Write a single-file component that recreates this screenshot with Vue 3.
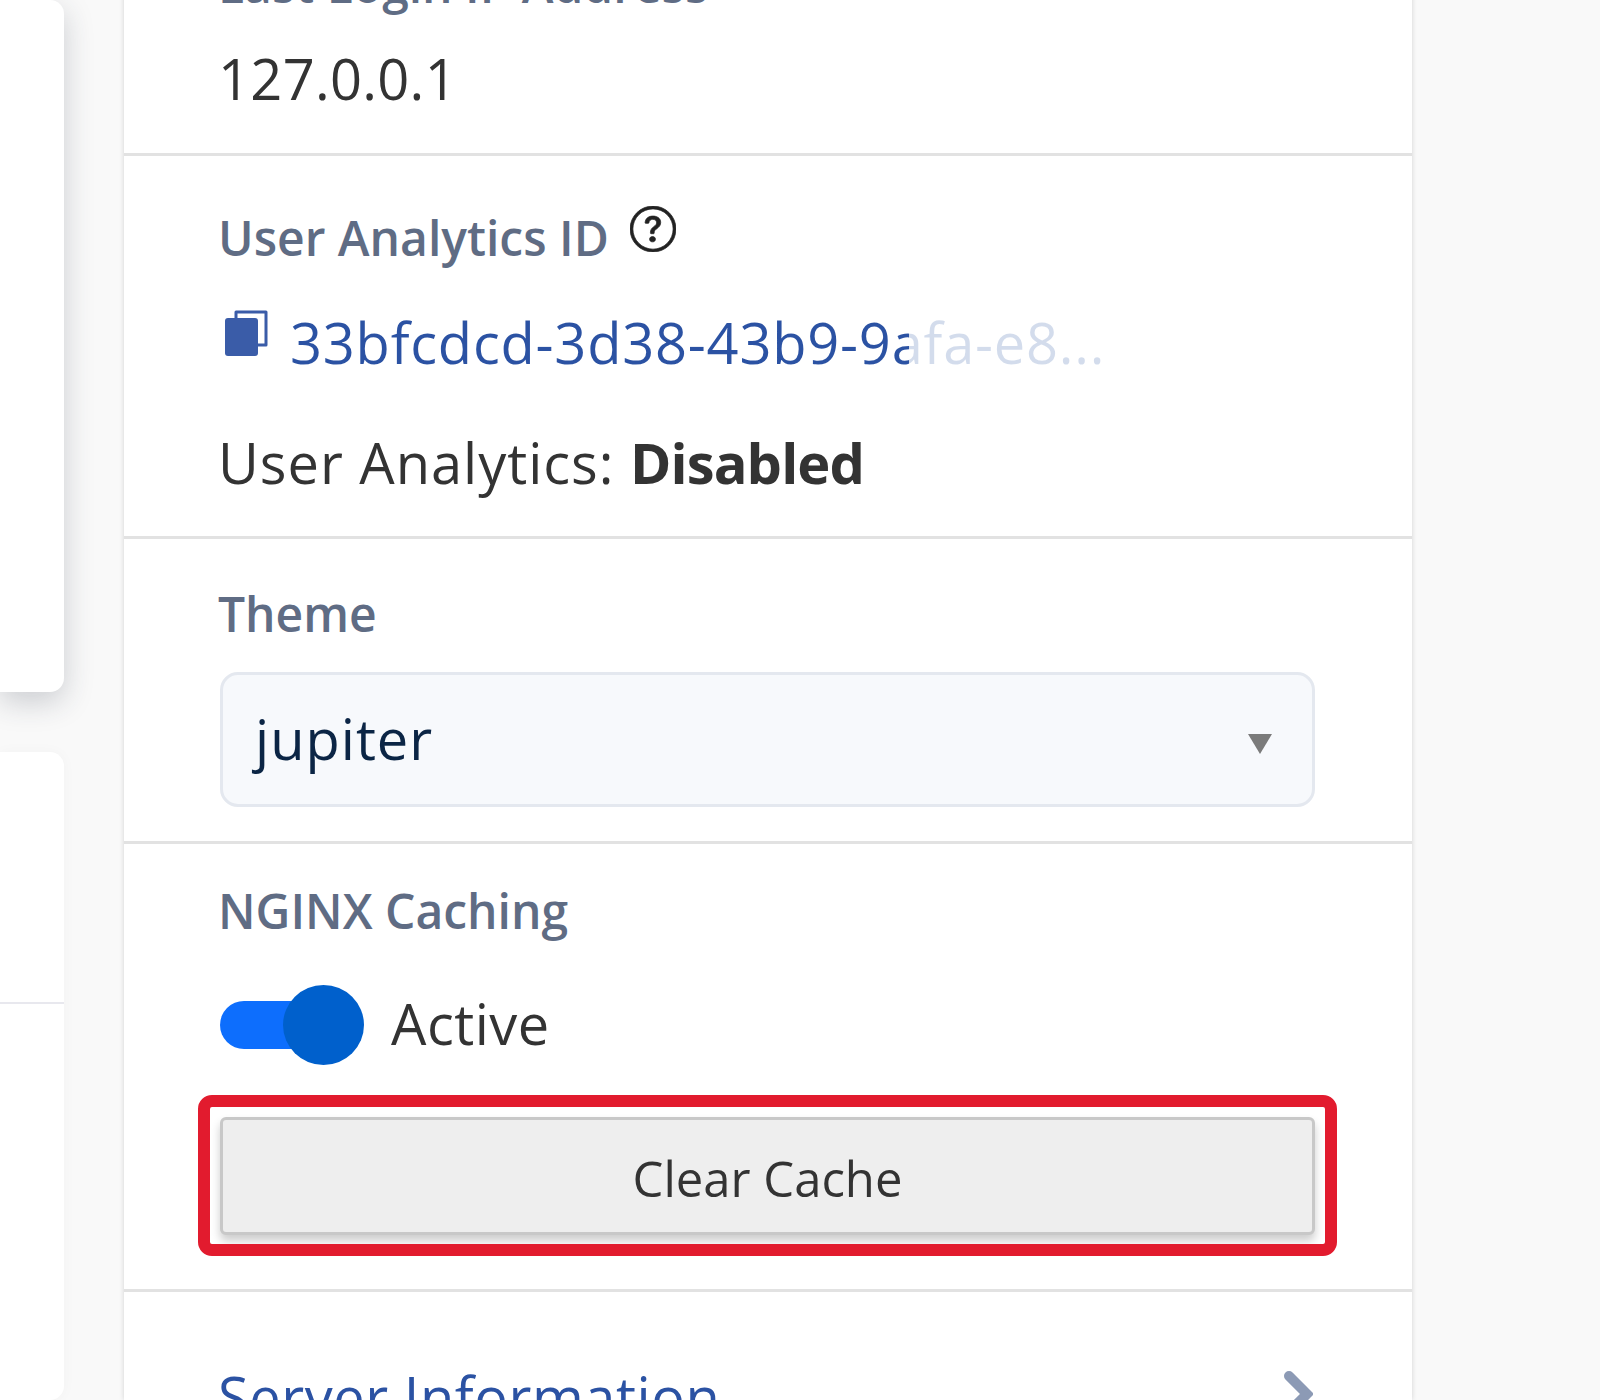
<template>
  <div class="page">
    <div class="side">
      <div class="side-card first"></div>
      <div class="side-card second">
        <div class="side-line"></div>
      </div>
    </div>

    <div class="panel">
      <section class="row row-login">
        <div class="label">Last Login IP Address</div>
        <div class="value">127.0.0.1</div>
      </section>

      <section class="row row-analytics">
        <div class="label">
          User Analytics ID
          <svg class="help" viewBox="0 0 16 16" fill="#222" stroke="#222" stroke-width=".25">
            <path d="M8 15A7 7 0 1 1 8 1a7 7 0 0 1 0 14zm0 1A8 8 0 1 0 8 0a8 8 0 0 0 0 16z" />
            <path d="M5.255 5.786a.237.237 0 0 0 .241.247h.825c.138 0 .248-.113.266-.25.09-.656.54-1.134 1.342-1.134.686 0 1.314.343 1.314 1.168 0 .635-.374.927-.965 1.371-.673.489-1.206 1.06-1.168 1.987l.003.217a.25.25 0 0 0 .25.246h.811a.25.25 0 0 0 .25-.25v-.105c0-.718.273-.927 1.01-1.486.609-.463 1.244-.977 1.244-2.056 0-1.511-1.276-2.241-2.673-2.241-1.267 0-2.655.59-2.75 2.286zm1.557 5.763c0 .533.425.927 1.01.927.609 0 1.028-.394 1.028-.927 0-.552-.42-.94-1.029-.94-.584 0-1.009.388-1.009.94z" />
          </svg>
        </div>
        <div class="id-row">
          <svg class="copy" viewBox="0 0 44 48">
            <path d="M12 9V3h30v33h-8" fill="none" stroke="#3a5ca8" stroke-width="3" stroke-linejoin="round" />
            <rect x="1" y="9" width="33" height="38" rx="3" fill="#3a5ca8" />
          </svg>
          <span class="id-text">{{ analyticsId }}</span>
        </div>
        <div class="value analytics-state">User Analytics: <b>Disabled</b></div>
      </section>

      <section class="row row-theme">
        <div class="label">Theme</div>
        <div class="select">
          <span>{{ theme }}</span>
          <i class="caret"></i>
        </div>
      </section>

      <section class="row row-nginx">
        <div class="label">NGINX Caching</div>
        <div class="toggle-row">
          <div class="toggle"><span class="thumb"></span></div>
          <span class="active-text">Active</span>
        </div>
        <div class="clear-wrap">
          <button class="clear-btn">Clear Cache</button>
        </div>
      </section>

      <section class="row row-server">
        <a class="server-link">Server Information</a>
        <svg class="chevron" viewBox="0 0 30 48">
          <path d="M6 6l18 18L6 42" fill="none" stroke="#8c9ab5" stroke-width="10" stroke-linecap="round" />
        </svg>
      </section>
    </div>
  </div>
</template>

<script setup>
const analyticsId = "33bfcdcd-3d38-43b9-9afa-e8...";
const theme = "jupiter";
</script>

<style>
html,
body {
  margin: 0;
  background: #f9f9f9;
}
</style>

<style scoped>
.page {
  display: flex;
  gap: 60px;
  height: 1400px;
  overflow: hidden;
  background: #f9f9f9;
  font-family: "Open Sans", "Liberation Sans", sans-serif;
  color: #333;
}

.side {
  width: 64px;
  flex-shrink: 0;
  display: flex;
  flex-direction: column;
  gap: 60px;
}

.side-card {
  background: #fff;
  border-radius: 0 14px 14px 0;
}

.side-card.first {
  height: 692px;
  box-shadow: 0 10px 30px rgba(40, 50, 70, 0.22);
}

.side-card.second {
  flex: 1;
  padding-top: 250px;
  box-shadow: 0 0 14px rgba(0, 0, 0, 0.03);
}

.side-line {
  height: 2px;
  background: #e8e8ee;
}

.panel {
  width: 1288px;
  flex-shrink: 0;
  box-sizing: border-box;
  margin-top: -90px;
  padding-top: 40px;
  background: #fff;
  box-shadow: 0 0 5px rgba(0, 0, 0, 0.16);
}

.row {
  padding: 0 97px 0 96px;
  border-bottom: 3px solid #e2e2e2;
}

.row-login {
  padding-bottom: 35px;
}

.row-analytics {
  padding-top: 47px;
  padding-bottom: 34px;
}

.row-theme {
  padding-top: 40px;
  padding-bottom: 34px;
}

.row-nginx {
  padding-top: 32px;
  padding-bottom: 54px;
}

.row-server {
  display: flex;
  justify-content: space-between;
  padding-top: 64px;
  border-bottom: none;
}

.label {
  margin-left: -2px;
  font-size: 48px;
  line-height: 70px;
  font-weight: 600;
  color: #5f6c84;
}

.value {
  margin-left: -2px;
  font-size: 56px;
  line-height: 80px;
}

.row-login .value {
  margin-top: 18px;
  letter-spacing: 0.3px;
}

.help {
  width: 46px;
  height: 46px;
  margin-left: 9px;
  vertical-align: 4px;
}

.id-row {
  display: flex;
  align-items: flex-start;
  gap: 22px;
  margin-top: 29px;
  height: 80px;
}

.copy {
  width: 44px;
  height: 48px;
  margin-left: 4px;
  margin-top: 7px;
  flex-shrink: 0;
}

.id-text {
  font-size: 56px;
  line-height: 80px;
  letter-spacing: 0.78px;
  color: transparent;
  background: linear-gradient(90deg, #2b52a3 619px, #d3dcec 619px);
  -webkit-background-clip: text;
  background-clip: text;
  white-space: nowrap;
}

.analytics-state {
  margin-top: 40px;
  letter-spacing: 0.98px;
}

.analytics-state b {
  font-weight: 700;
  letter-spacing: -0.9px;
}

.select {
  box-sizing: border-box;
  height: 135px;
  margin-top: 23px;
  padding: 0 32px 4px;
  display: flex;
  align-items: center;
  justify-content: space-between;
  font-size: 56px;
  letter-spacing: 1px;
  color: #0b2545;
  background: #f7f9fc;
  border: 3px solid #e4e8ef;
  border-radius: 18px;
}

.caret {
  width: 0;
  height: 0;
  margin-right: 8px;
  margin-top: 12px;
  border-left: 12px solid transparent;
  border-right: 12px solid transparent;
  border-top: 20px solid #7b7b7b;
}

.toggle-row {
  display: flex;
  align-items: center;
  gap: 27px;
  margin-top: 35px;
}

.toggle {
  position: relative;
  width: 124px;
  height: 48px;
  margin-top: 6px;
  margin-right: 20px;
  border-radius: 24px;
  background: #0d6efd;
}

.thumb {
  position: absolute;
  right: -20px;
  top: -16px;
  width: 81px;
  height: 80px;
  border-radius: 50%;
  background: #0060cc;
}

.active-text {
  margin-top: 2px;
  font-size: 56px;
  line-height: 80px;
  letter-spacing: 0.5px;
}

.clear-wrap {
  position: relative;
  margin-top: 54px;
}

/* red callout drawn over the screenshot */
.clear-wrap::after {
  content: "";
  position: absolute;
  inset: -22px -22px -21px;
  border: 12px solid #e21b2e;
  border-radius: 14px;
  pointer-events: none;
}

.clear-btn {
  display: block;
  box-sizing: border-box;
  width: 100%;
  height: 118px;
  padding: 4px 0 0;
  font-family: inherit;
  font-size: 49px;
  color: #333;
  background: #eee;
  border: 3px solid #c8c8c8;
  border-radius: 6px;
  box-shadow: 0 6px 10px rgba(0, 0, 0, 0.2);
}

.server-link {
  margin-left: -2px;
  font-size: 56px;
  line-height: 80px;
  letter-spacing: 0.55px;
  color: #2b52a3;
}

.chevron {
  width: 30px;
  height: 48px;
  margin-top: 14px;
  margin-right: 2px;
}
</style>
